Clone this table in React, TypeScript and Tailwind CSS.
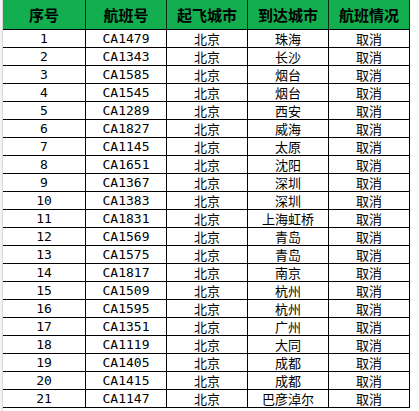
const rows: [string, string, string, string, string][] = [
  ['1', 'CA1479', '北京', '珠海', '取消'],
  ['2', 'CA1343', '北京', '长沙', '取消'],
  ['3', 'CA1585', '北京', '烟台', '取消'],
  ['4', 'CA1545', '北京', '烟台', '取消'],
  ['5', 'CA1289', '北京', '西安', '取消'],
  ['6', 'CA1827', '北京', '威海', '取消'],
  ['7', 'CA1145', '北京', '太原', '取消'],
  ['8', 'CA1651', '北京', '沈阳', '取消'],
  ['9', 'CA1367', '北京', '深圳', '取消'],
  ['10', 'CA1383', '北京', '深圳', '取消'],
  ['11', 'CA1831', '北京', '上海虹桥', '取消'],
  ['12', 'CA1569', '北京', '青岛', '取消'],
  ['13', 'CA1575', '北京', '青岛', '取消'],
  ['14', 'CA1817', '北京', '南京', '取消'],
  ['15', 'CA1509', '北京', '杭州', '取消'],
  ['16', 'CA1595', '北京', '杭州', '取消'],
  ['17', 'CA1351', '北京', '广州', '取消'],
  ['18', 'CA1119', '北京', '大同', '取消'],
  ['19', 'CA1405', '北京', '成都', '取消'],
  ['20', 'CA1415', '北京', '成都', '取消'],
  ['21', 'CA1147', '北京', '巴彦淖尔', '取消'],
];

const headers = ['序号', '航班号', '起飞城市', '到达城市', '航班情况'];

const cols = 'grid grid-cols-[83px_81px_81px_81px_81px]';

export default function App() {
  return (
    <div
      lang="zh-CN"
      className="flex h-[411px] w-[419px] overflow-hidden bg-white font-['Noto_Sans_CJK_SC',sans-serif]"
    >
      {/* row header edge */}
      <div className="w-[3px] shrink-0 border-r border-[#d6d6d6] bg-[#f4f4f4]" />

      <div className="flex w-[407px] flex-col">
        {/* header */}
        <div className={`${cols} h-[30px] shrink-0 border-b border-black bg-[#12ae50]`}>
          {headers.map((h) => (
            <div
              key={h}
              className="flex items-center justify-center border-r border-[#0d2a16] text-[15px] font-bold leading-[20px] text-black"
            >
              {h}
            </div>
          ))}
        </div>

        {/* rows */}
        {rows.map((r) => (
          <div key={r[0]} className={`${cols} h-[18px] shrink-0 border-b border-black`}>
            {r.map((c, i) => (
              <div
                key={i}
                className={
                  'flex items-end justify-center border-r border-black text-black ' +
                  (i < 2
                    ? "pb-[1px] font-['DejaVu_Sans_Mono',monospace] text-[13px] leading-[15px]"
                    : 'text-[13px] leading-[16px]')
                }
              >
                {c}
              </div>
            ))}
          </div>
        ))}
      </div>
    </div>
  );
}
